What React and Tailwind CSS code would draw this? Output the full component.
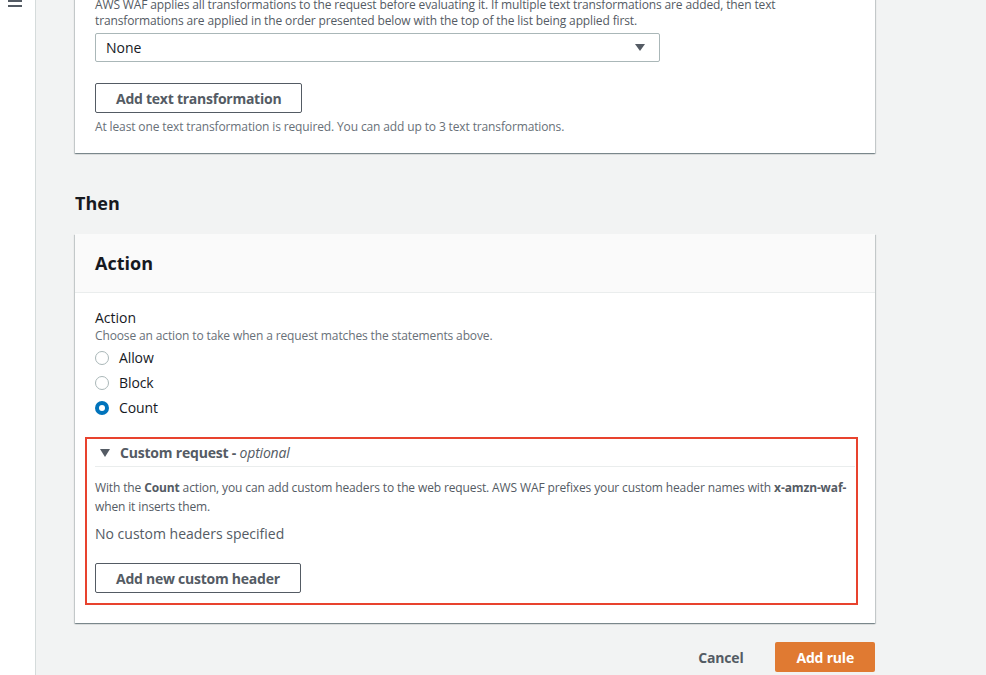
import React, { useState } from 'react';

const cardShadow = 'shadow-[0_1px_1px_0_rgba(0,28,36,0.3),1px_1px_1px_0_rgba(0,28,36,0.15),-1px_1px_1px_0_rgba(0,28,36,0.15)]';

const Radio = ({ label, checked, onChange }) => (
    <label className="flex items-center h-[25px] cursor-pointer" onClick={onChange}>
        {checked ? (
            <span className="w-[14px] h-[14px] rounded-full bg-[#0073bb] flex items-center justify-center">
                <span className="w-[6px] h-[6px] rounded-full bg-white"></span>
            </span>
        ) : (
            <span className="w-[14px] h-[14px] rounded-full border border-[#aab7b8] bg-white"></span>
        )}
        <span className="ml-[10px] text-[14px] tracking-[-0.1px] text-[#16191f]">{label}</span>
    </label>
);

const App = () => {
    const [action, setAction] = useState('count');

    return (
        <div className="flex min-h-[675px] bg-[#f2f3f3] text-[#16191f]" style={{ fontFamily: '"Open Sans", "Liberation Sans", sans-serif' }}>
            <div className="w-[36px] shrink-0 bg-white border-r border-[#d5dbdb] relative">
                <div className="absolute left-[8px] top-[0px] w-[14px] h-[2px] bg-[#545b64]"></div>
                <div className="absolute left-[8px] top-[5px] w-[14px] h-[2px] bg-[#545b64]"></div>
            </div>

            <div className="flex-1 pl-[39px]">
                {/* text transformation card (scrolled partly out of view) */}
                <div className={`w-[800px] bg-white ${cardShadow} px-5 pb-[18px]`}>
                    <p className="-mt-[3px] text-[12px] leading-[16px] tracking-[-0.13px] text-[#545b64]">
                        AWS WAF applies all transformations to the request before evaluating it. If multiple text transformations are added, then text transformations are applied in the order presented below with the top of the list being applied first.
                    </p>
                    <div className="mt-[4px] w-[565px] h-[29px] border border-[#aab7b8] rounded-[2px] flex items-center justify-between pl-[10px] pr-[14px]">
                        <span className="text-[14px]">None</span>
                        <svg width="10" height="8" viewBox="0 0 10 8"><path d="M0 0h10L5 7z" fill="#545b64" /></svg>
                    </div>
                    <button className="mt-[21px] h-[30px] px-[20px] border border-[#545b64] rounded-[2px] text-[14px] font-bold tracking-[-0.25px] text-[#545b64] bg-white">
                        Add text transformation
                    </button>
                    <p className="mt-[6px] text-[12px] leading-[16px] tracking-[-0.13px] text-[#687078]">
                        At least one text transformation is required. You can add up to 3 text transformations.
                    </p>
                </div>

                <h2 className="mt-[39px] text-[18px] leading-[22px] font-bold">Then</h2>

                {/* action card */}
                <div className={`mt-[20px] w-[800px] bg-white ${cardShadow}`}>
                    <div className="bg-[#fafafa] border-b border-[#eaeded] px-5 py-[18px]">
                        <h3 className="text-[18px] leading-[22px] font-bold">Action</h3>
                    </div>
                    <div className="px-5 pt-[15px] pb-[18px]">
                        <div className="text-[14px] leading-[20px]">Action</div>
                        <div className="text-[12px] leading-[16px] tracking-[-0.13px] text-[#687078]">Choose an action to take when a request matches the statements above.</div>
                        <div className="mt-[1px]">
                            <Radio label="Allow" checked={action === 'allow'} onChange={() => setAction('allow')} />
                            <Radio label="Block" checked={action === 'block'} onChange={() => setAction('block')} />
                            <Radio label="Count" checked={action === 'count'} onChange={() => setAction('count')} />
                        </div>

                        <div className="mt-[17px] -ml-[10px] -mr-[3px] border-2 border-[#e8432e] pl-[8px] pr-[1px] pb-[10px]">
                            <div className="flex items-center h-[28px] border-b border-[#eaeded] pl-[5px]">
                                <svg width="10" height="8" viewBox="0 0 10 8"><path d="M0 0h10L5 8z" fill="#545b64" /></svg>
                                <span className="ml-[10px] text-[14px] font-bold tracking-[-0.2px] text-[#545b64]">Custom request - <i className="font-normal">optional</i></span>
                            </div>
                            <p className="mt-[11px] text-[12px] leading-[19px] tracking-[-0.13px] text-[#545b64]">
                                With the <b>Count</b> action, you can add custom headers to the web request. AWS WAF prefixes your custom header names with <b>x-amzn-waf-</b> when it inserts them.
                            </p>
                            <div className="mt-[7px] text-[14px] leading-[22px] text-[#545b64]">No custom headers specified</div>
                            <button className="mt-[18px] h-[30px] px-[20px] border border-[#545b64] rounded-[2px] text-[14px] font-bold tracking-[-0.25px] text-[#545b64] bg-white">
                                Add new custom header
                            </button>
                        </div>
                    </div>
                </div>

                <div className="w-[800px] mt-[19px] flex justify-end items-center gap-[12px]">
                    <button className="h-[30px] px-[20px] text-[14px] font-bold tracking-[-0.2px] text-[#545b64]">Cancel</button>
                    <button className="h-[30px] px-[21px] rounded-[2px] bg-[#e07a32] text-[14px] font-bold tracking-[-0.2px] text-white">Add rule</button>
                </div>
            </div>
        </div>
    );
};

export default App;
